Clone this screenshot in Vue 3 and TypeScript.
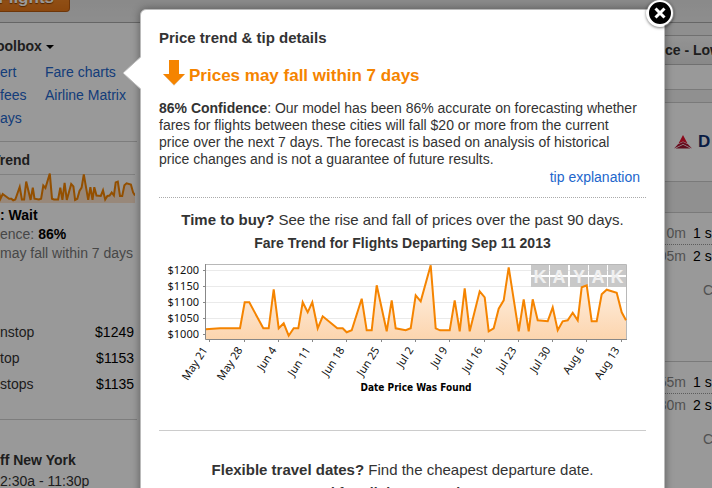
<script setup lang="ts">
// Shared fare history, [x, y] on a grid three times finer than the chart
const fares: [number, number][] = [
  [137, 238], [180, 235], [240, 235], [254, 157], [268, 157], [310, 235], [326, 235], [341, 118],
  [356, 235], [371, 220], [386, 257], [401, 235], [415, 235], [428, 157], [443, 187], [457, 157],
  [473, 235], [488, 199], [532, 235], [548, 235], [560, 247], [575, 241], [605, 146], [620, 241],
  [635, 241], [650, 106], [680, 244], [695, 151], [707, 235], [737, 241], [752, 235], [767, 136],
  [782, 154], [812, 46], [827, 235], [840, 241], [869, 241], [884, 151], [899, 244], [914, 115],
  [929, 244], [959, 124], [974, 142], [986, 244], [1001, 235], [1016, 176], [1031, 151], [1046, 52],
  [1076, 244], [1091, 148], [1106, 244], [1118, 148], [1133, 211], [1163, 214], [1178, 172], [1193, 241],
  [1208, 214], [1223, 211], [1238, 188], [1253, 211], [1265, 112], [1280, 106], [1295, 214], [1310, 214],
  [1325, 133], [1340, 119], [1370, 128], [1385, 187], [1398, 211],
]

const line = fares.map(([x, y]) => `${(x / 3 + 1).toFixed(1)},${(y / 3 - 4).toFixed(1)}`).join(' ')
const area = `46.7,85 ${line} 467,85`

const spark = fares
  .map(([x, y]) => `${(135 - (1398 - x) * 0.1454).toFixed(1)},${(1 + (y - 49) * 0.133).toFixed(1)}`)
  .join(' ')
const sparkArea = `-49,30 ${spark} 135,30`

const priceTicks = [
  { label: '$1200', y: 16 },
  { label: '$1150', y: 32 },
  { label: '$1100', y: 48 },
  { label: '$1050', y: 64 },
  { label: '$1000', y: 80 },
]

const dateTicks = [
  { label: 'May 21', x: 50 },
  { label: 'May 28', x: 85 },
  { label: 'Jun 4', x: 119 },
  { label: 'Jun 11', x: 153 },
  { label: 'Jun 18', x: 187 },
  { label: 'Jun 25', x: 222 },
  { label: 'Jul 2', x: 256 },
  { label: 'Jul 9', x: 290 },
  { label: 'Jul 16', x: 325 },
  { label: 'Jul 23', x: 359 },
  { label: 'Jul 30', x: 393 },
  { label: 'Aug 6', x: 427 },
  { label: 'Aug 13', x: 462 },
]

const tiles = [
  { letter: 'K', x: 372 },
  { letter: 'A', x: 391 },
  { letter: 'Y', x: 411 },
  { letter: 'A', x: 430 },
  { letter: 'K', x: 449 },
]

const stopPrices = [
  { name: 'nstop', price: '$1249' },
  { name: 'top', price: '$1153' },
  { name: 'stops', price: '$1135' },
]

const flights = [
  [{ time: '0m', stops: '1 s' }, { time: '05m', stops: '2 s' }],
  [{ time: '55m', stops: '1 s' }, { time: '30m', stops: '2 s' }],
]
</script>

<template>
  <div class="page">
    <header class="topbar">
      <button class="search" type="button">d Flights</button>
    </header>

    <div class="columns">
      <aside class="sidebar">
        <section class="toolbox">
          <h2 class="toolbox-title">oolbox <i class="caret"></i></h2>
          <nav class="tools">
            <a href="#">ert</a><a href="#">Fare charts</a>
            <a href="#">fees</a><a href="#">Airline Matrix</a>
            <a href="#">ays</a>
          </nav>
        </section>

        <section class="trend">
          <h2>Trend</h2>
          <svg class="spark" width="135" height="30" viewBox="0 0 135 30" aria-hidden="true">
            <path d="M0 1.5H135" stroke="#d8d8d8" />
            <polygon :points="sparkArea" fill="#fde3cb" />
            <polyline :points="spark" fill="none" stroke="#f58400" stroke-width="2" />
          </svg>
          <p class="tip"><b>: Wait</b></p>
          <p class="tip">ence: <b>86%</b></p>
          <p class="tip">may fall within 7 days</p>
        </section>

        <ul class="stops">
          <li v-for="s in stopPrices" :key="s.name">
            <span>{{ s.name }}</span><span class="price">{{ s.price }}</span>
          </li>
        </ul>

        <section class="takeoff">
          <h2>ff New York</h2>
          <p>2:30a - 11:30p</p>
        </section>
      </aside>

      <main class="results">
        <div class="sort">ce - Low</div>
        <div class="filler"></div>
        <div class="band"></div>
        <div class="airline">
          <svg width="18" height="14" viewBox="0 0 18 14" aria-hidden="true">
            <path d="M9 0L13.500 8.500L9 6.500L4.500 8.500Z" fill="#e8102e" />
            <path d="M4 9.200L9 7L14 9.200L18 13.500L9 9L0 13.500Z" fill="#b01030" />
            <path d="M1.500 13.500L9 9.800L16.500 13.500Z" fill="#a01530" />
          </svg>
          <b>D</b>
        </div>
        <div class="band tall"></div>
        <div v-for="(group, i) in flights" :key="i" class="flight">
          <div v-for="leg in group" :key="leg.time" class="leg">
            <span class="time">{{ leg.time }}</span><span>{{ leg.stops }}</span>
          </div>
          <div class="cabin">C</div>
        </div>
      </main>
    </div>

    <div class="overlay"></div>

    <div class="modal" role="dialog" aria-labelledby="modal-title">
      <svg class="pointer" width="20" height="34" viewBox="0 0 20 34" aria-hidden="true">
        <path d="M20 0L1 17L20 34Z" fill="#fff" />
        <path d="M19 .5L1 17L19 33.500" fill="none" stroke="#bbb" />
      </svg>
      <button class="close" type="button" aria-label="Close">
        <svg width="28" height="28" viewBox="0 0 28 28">
          <circle cx="14" cy="14" r="12" fill="#000" stroke="#fff" stroke-width="2" />
          <path d="M9.500 9.500L18.500 18.500M18.500 9.500L9.500 18.500" stroke="#fff" stroke-width="3" />
        </svg>
      </button>

      <h1 id="modal-title">Price trend &amp; tip details</h1>
      <div class="headline">
        <svg width="22" height="27" viewBox="0 0 22 27" aria-hidden="true">
          <path d="M6 1H16V14H22L11 26L0 14H6Z" fill="#ccc" opacity=".6" />
          <path d="M6 0H16V14H22L11 25L0 14H6Z" fill="#f58400" />
        </svg>
        <strong>Prices may fall within 7 days</strong>
      </div>
      <p class="body">
        <b>86% Confidence</b>: Our model has been 86% accurate on forecasting whether
        fares for flights between these cities will fall $20 or more from the current
        price over the next 7 days. The forecast is based on analysis of historical
        price changes and is not a guarantee of future results.
      </p>
      <a class="explain" href="#">tip explanation</a>

      <section class="buy">
        <p class="question"><b>Time to buy?</b> See the rise and fall of prices over the past 90 days.</p>
        <h2 class="chart-title">Fare Trend for Flights Departing Sep 11 2013</h2>
        <svg class="chart" viewBox="0 0 487 150" role="img" aria-label="Fare Trend">
          <defs>
            <linearGradient id="fill" x1="0" y1="10" x2="0" y2="85" gradientUnits="userSpaceOnUse">
              <stop offset="0" stop-color="#fff8f2" />
              <stop offset="1" stop-color="#fcd5ae" />
            </linearGradient>
          </defs>
          <path v-for="t in priceTicks" :key="t.y" :d="`M47 ${t.y + 0.5}H467`" stroke="#eaeaea" />
          <g v-for="t in tiles" :key="t.x">
            <rect :x="t.x" y="11" width="18" height="10" fill="#c8c8c8" />
            <rect :x="t.x" y="23" width="18" height="10" fill="#c8c8c8" />
            <text class="tile" :x="t.x + 9" y="29">{{ t.letter }}</text>
          </g>
          <polygon :points="area" fill="url(#fill)" />
          <path d="M46 10.500H467.500V85" fill="none" stroke="#b8b8b8" />
          <polyline :points="line" fill="none" stroke="#f58400" stroke-width="2" />
          <path d="M46.500 10V85.500H468" fill="none" stroke="#888" />
          <g v-for="t in priceTicks" :key="t.label">
            <path :d="`M44 ${t.y + 0.5}H46`" stroke="#888" />
            <text class="axis" x="40" :y="t.y + 4">{{ t.label }}</text>
          </g>
          <g v-for="t in dateTicks" :key="t.label">
            <path :d="`M${t.x + 0.5} 86V88`" stroke="#888" />
            <text class="axis" :transform="`translate(${t.x - 1} 96) rotate(-57)`">{{ t.label }}</text>
          </g>
          <text class="axis-title" x="257" y="137">Date Price Was Found</text>
        </svg>
      </section>

      <section class="flexible">
        <p class="question"><b>Flexible travel dates?</b> Find the cheapest departure date.</p>
        <h2 class="chart-title">Fare Trend for Flights Returning Sep 2013</h2>
      </section>
    </div>
  </div>
</template>

<style>
body {
  overflow: hidden;
}
</style>

<style scoped>
.page {
  position: relative;
  height: 100vh;
  overflow: hidden;
  background: #fff;
  color: #333;
  font: 14px/18px "Liberation Sans", Arial, sans-serif;
}
h1, h2, p, ul {
  margin: 0;
  padding: 0;
  font-size: 14px;
}
h1 {
  font-size: 15px;
}
a {
  color: #26c;
  text-decoration: none;
}
.topbar {
  display: flex;
  align-items: flex-end;
  height: 22px;
  overflow: hidden;
  background: linear-gradient(#e6e6e6, #ececec);
  border-bottom: 1px solid #aaa;
}
.search {
  display: flex;
  justify-content: flex-end;
  align-items: flex-end;
  width: 70px;
  height: 32px;
  margin: 0 0 10px;
  padding: 0 15px 0 0;
  border: 1px solid #b85a10;
  border-left: 0;
  border-radius: 0 4px 4px 0;
  background: linear-gradient(#ff9838, #e87818);
  color: #fff;
  font: bold 17px/26px "Liberation Sans", Arial, sans-serif;
  text-shadow: 0 1px 1px #843c00;
  white-space: nowrap;
}
.columns {
  display: grid;
  grid-template-columns: 137px 1fr 47px;
}
.sidebar {
  padding-top: 12px;
}
.toolbox {
  padding-bottom: 11px;
  border-bottom: 1px solid #d0d0d0;
}
.toolbox-title {
  display: flex;
  align-items: center;
  gap: 4px;
  margin-left: -4px;
  line-height: 23px;
}
.caret {
  border: 4px solid transparent;
  border-top-color: #000;
  border-bottom: 0;
}
.tools {
  display: grid;
  grid-template-columns: 45px 1fr;
  padding-top: 3px;
  line-height: 23px;
  white-space: nowrap;
}
.trend {
  padding-top: 9px;
}
.trend h2 {
  margin-left: -8px;
}
.spark {
  display: block;
  margin: 4px 0 3px;
}
.tip {
  color: #777;
  line-height: 19px;
  white-space: nowrap;
}
.tip b {
  color: #000;
}
.stops {
  padding: 56px 0 22px;
  border-bottom: 1px solid #d0d0d0;
  list-style: none;
  line-height: 26px;
}
.stops li {
  display: flex;
  justify-content: space-between;
  padding-right: 3px;
}
.price {
  color: #000;
}
.takeoff {
  padding-top: 30px;
  line-height: 21px;
}
.results {
  grid-column: 3;
  overflow: hidden;
  padding-top: 12px;
  background: linear-gradient(#eee 12px, #fff 12px);
  white-space: nowrap;
}
.sort {
  height: 28px;
  border: 1px solid #bbb;
  border-width: 1px 0;
  background: linear-gradient(#f6f6f6, #e4e4e4);
  font-weight: bold;
  line-height: 28px;
}
.filler {
  height: 24px;
}
.band {
  height: 12px;
  border: 1px solid #ccc;
  border-width: 1px 0;
  background: #f0f0f0;
}
.band.tall {
  height: 30px;
}
.airline {
  display: flex;
  align-items: center;
  gap: 6px;
  height: 78px;
  padding-left: 9px;
  color: #103070;
  font-size: 17px;
}
.flight {
  height: 139px;
  padding-top: 9px;
  border-bottom: 1px solid #ccc;
}
.leg {
  display: flex;
  gap: 7px;
  padding: 2px 0;
  color: #000;
}
.leg:first-child {
  border-bottom: 1px dotted #999;
}
.time {
  display: flex;
  justify-content: flex-end;
  width: 21px;
  color: #888;
}
.cabin {
  padding: 14px 0 0 38px;
  color: #888;
}
.overlay {
  position: absolute;
  inset: 0;
  background: rgba(0, 0, 0, 0.4);
}
.modal {
  position: absolute;
  top: 9px;
  left: 140px;
  right: 47px;
  padding: 19px 18px;
  border: 1px solid #bbb;
  border-radius: 6px;
  background: #fff;
  box-shadow: 0 0 8px rgba(0, 0, 0, 0.4);
}
.pointer {
  position: absolute;
  top: 46px;
  left: -19px;
}
.close {
  position: absolute;
  top: -11px;
  right: -10px;
  width: 28px;
  height: 28px;
  padding: 0;
  border: 0;
  border-radius: 50%;
  background: none;
  box-shadow: 0 1px 3px rgba(0, 0, 0, 0.5);
}
.close svg {
  display: block;
}
.headline {
  display: flex;
  align-items: center;
  gap: 4px;
  padding: 13px 0 13px 4px;
  color: #f58400;
  font-size: 17px;
  line-height: 22px;
}
.headline strong {
  padding-top: 5px;
}
.body {
  padding-right: 7px;
  line-height: 17px;
}
.explain {
  display: block;
  padding-right: 6px;
  text-align: right;
}
.buy {
  margin-top: 11px;
  padding: 13px 0 26px;
  border-top: 1px dotted #aaa;
  border-bottom: 1px solid #ccc;
}
.question {
  font-size: 15px;
  text-align: center;
}
.chart-title {
  padding: 5px 0 2px;
  text-align: center;
}
.chart {
  display: block;
  width: 100%;
}
.axis {
  fill: #111;
  font: 11px "Noto Sans", sans-serif;
  text-anchor: end;
}
.axis-title {
  fill: #000;
  font: bold 10px "DejaVu Sans Condensed", "Noto Sans", sans-serif;
  text-anchor: middle;
}
.tile {
  fill: #f0f0f0;
  font: bold 18px "Liberation Sans", Arial, sans-serif;
  text-anchor: middle;
}
.flexible {
  padding-top: 30px;
}
</style>
